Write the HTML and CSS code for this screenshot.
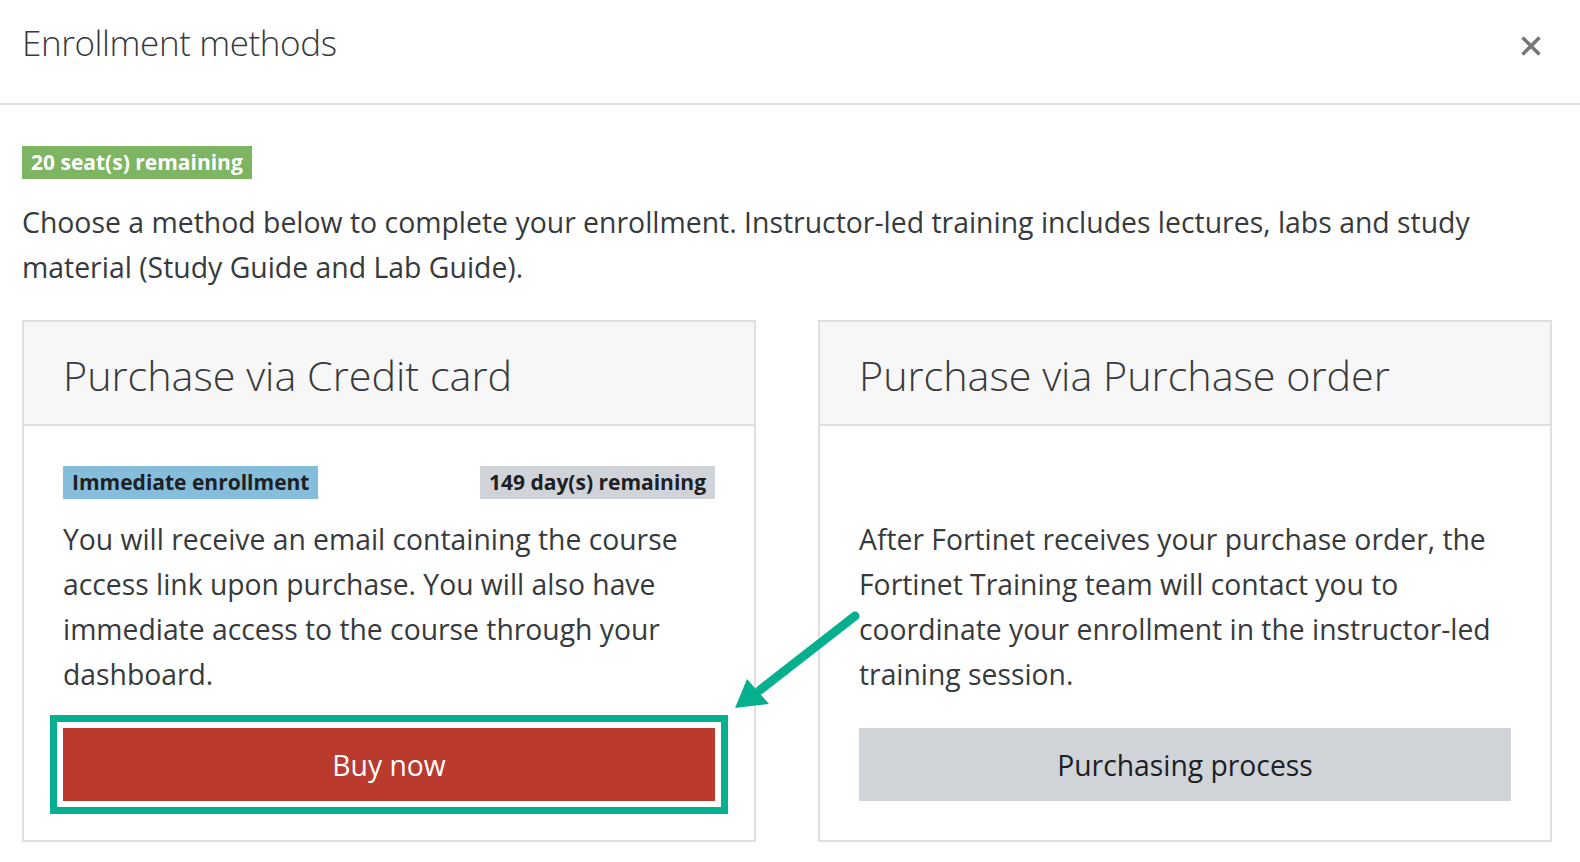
FILE: index.html
```html
<!DOCTYPE html>
<html lang="en">
<head>
<meta charset="utf-8">
<title>Enrollment methods</title>
<link rel="stylesheet" href="styles.css">
</head>
<body>
<div class="modal">
  <header class="modal-header">
    <h5 class="modal-title">Enrollment methods</h5>
    <button class="close" aria-label="Close">
      <svg width="22" height="20" viewBox="0 0 22 20"><path d="M2.5 1.5 L19.5 18.5 M19.5 1.5 L2.5 18.5" stroke="#777" stroke-width="3.6" stroke-linecap="butt" fill="none"/></svg>
    </button>
  </header>
  <div class="modal-body">
    <span class="badge badge-success">20 seat(s) remaining</span>
    <p class="intro">Choose a method below to complete your enrollment. Instructor-led training includes lectures, labs and study material (Study Guide and Lab Guide).</p>
    <div class="cards">
      <div class="card">
        <div class="card-header"><h3 class="card-title">Purchase via Credit card</h3></div>
        <div class="card-body">
          <div class="badges">
            <span class="badge badge-info">Immediate enrollment</span>
            <span class="badge badge-secondary">149 day(s) remaining</span>
          </div>
          <p class="card-text">You will receive an email containing the course access link upon purchase. You will also have immediate access to the course through your dashboard.</p>
          <button class="btn btn-danger highlighted">Buy now</button>
        </div>
      </div>
      <div class="card">
        <div class="card-header"><h3 class="card-title">Purchase via Purchase order</h3></div>
        <div class="card-body">
          <div class="badges"></div>
          <p class="card-text">After Fortinet receives your purchase order, the Fortinet Training team will contact you to coordinate your enrollment in the instructor-led training session.</p>
          <button class="btn btn-secondary">Purchasing process</button>
        </div>
      </div>
    </div>
  </div>
  <svg class="annotation" width="1580" height="862" viewBox="0 0 1580 862">
    <line x1="855" y1="616" x2="760" y2="690" stroke="#06b08f" stroke-width="9" stroke-linecap="round"/>
    <polygon points="735,708 747,679 769,704" fill="#06b08f"/>
  </svg>
</div>
</body>
</html>
```
FILE: styles.css
```css
html, body {
  margin: 0;
  padding: 0;
  background: #fff;
}
body {
  font-family: "Open Sans", "Noto Sans", "Liberation Sans", sans-serif;
  color: #373a3c;
  width: 1580px;
  height: 862px;
  overflow: hidden;
}
.modal {
  position: relative;
  width: 1580px;
  height: 862px;
}
.modal-header {
  display: flex;
  justify-content: space-between;
  align-items: flex-start;
  height: 103px;
  padding: 0 38px 0 22px;
  border-bottom: 2px solid #dee2e6;
  box-sizing: content-box;
}
.modal-title {
  margin: 20px 0 0 0;
  font-size: 35px;
  line-height: 46px;
  font-weight: 300;
  letter-spacing: -0.4px;
  color: #373a3c;
}
.close {
  margin-top: 36px;
  padding: 0;
  border: 0;
  background: none;
  width: 22px;
  height: 20px;
  display: flex;
}
.modal-body {
  padding: 41px 28px 0 22px;
}
.badge {
  display: inline-block;
  height: 33px;
  line-height: 33px;
  padding: 0 9px;
  font-size: 21px;
  font-weight: 700;
  white-space: nowrap;
}
.badge-success {
  background: #7db563;
  color: #fff;
}
.badge-info {
  background: #86bddb;
  color: #1d2125;
}
.badge-secondary {
  background: #d0d3d8;
  color: #1d2125;
}
.intro {
  margin: 21px 0 0 0;
  font-size: 28.4px;
  line-height: 45px;
}
.cards {
  display: grid;
  grid-template-columns: 734px 734px;
  column-gap: 62px;
  margin-top: 30px;
}
.card {
  border: 2px solid #dfdfdf;
  display: flex;
  flex-direction: column;
}
.card-header {
  background: #f7f7f7;
  border-bottom: 2px solid #dfdfdf;
  padding: 23px 39px 19px 39px;
}
.card-title {
  margin: 0;
  font-size: 41.3px;
  line-height: 60px;
  font-weight: 300;
  color: #373a3c;
}
.card-body {
  padding: 40px 39px 39px 39px;
  display: flex;
  flex-direction: column;
}
.badges {
  display: flex;
  justify-content: space-between;
  height: 33px;
}
.card-text {
  margin: 18px 0 0 0;
  font-size: 28.3px;
  line-height: 45px;
  height: 180px;
}
.btn {
  margin-top: 31px;
  height: 73px;
  border: 0;
  font-family: inherit;
  font-size: 28.3px;
  font-weight: 400;
  padding: 0;
  width: 100%;
}
.btn-danger {
  background: #bb3a2e;
  color: #fff;
}
.btn-secondary {
  background: #d0d3d8;
  color: #1d2125;
}
.highlighted {
  outline: 7px solid #06b08f;
  outline-offset: 6px;
}
.annotation {
  position: absolute;
  left: 0;
  top: 0;
  pointer-events: none;
}
```
